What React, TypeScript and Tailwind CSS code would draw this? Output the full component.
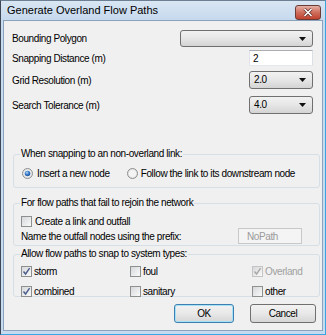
import React from 'react'

const sans = "font-['Liberation_Sans',Arial,sans-serif]"

function Arrow() {
  return (
    <svg width="7" height="4" viewBox="0 0 7 4" className="shrink-0">
      <path d="M0 0 H7 L3.5 4 Z" fill="#111" />
    </svg>
  )
}

function Combo({ value, className }: { value?: string; className: string }) {
  return (
    <div className={`flex items-center justify-between rounded-[3px] border border-[#707070] bg-gradient-to-b from-[#f2f2f2] via-[#e6e6e6] to-[#d4d4d4] pl-[4px] pr-[6px] ${className}`}>
      <span className="leading-none">{value}</span>
      <Arrow />
    </div>
  )
}

function CheckBox({ checked, disabled }: { checked?: boolean; disabled?: boolean }) {
  return (
    <span className={`flex h-[11px] w-[11px] shrink-0 items-center justify-center border ${disabled ? 'border-[#c4c4c4]' : 'border-[#8e8f8f]'} bg-gradient-to-br from-[#d6d8db] to-[#fafafa]`}>
      {checked && (
        <svg width="9" height="9" viewBox="0 0 9 9">
          <path d="M1.5 4.5 L3.6 7 L7.6 1.2" fill="none" stroke={disabled ? '#a8a8a8' : '#4a5d88'} strokeWidth="1.4" />
        </svg>
      )}
    </span>
  )
}

function Radio({ checked }: { checked?: boolean }) {
  return (
    <svg width="11" height="11" viewBox="0 0 11 11" className="shrink-0">
      <defs>
        <radialGradient id="rg" cx="0.4" cy="0.35" r="0.7">
          <stop offset="0" stopColor="#b8dcf7" />
          <stop offset="0.5" stopColor="#3a7bc8" />
          <stop offset="1" stopColor="#1d4f91" />
        </radialGradient>
      </defs>
      <circle cx="5.5" cy="5.5" r="5" fill="#e4e4e4" stroke="#8e8f8f" strokeWidth="1" />
      <circle cx="5.5" cy="5.5" r="3.6" fill="#f4f4f4" />
      {checked && <circle cx="5.5" cy="5.5" r="2.8" fill="url(#rg)" />}
    </svg>
  )
}

function Group({ title, className, children }: { title: string; className: string; children: React.ReactNode }) {
  return (
    <fieldset className={`ml-[9px] mr-[2px] rounded-[3px] border border-[#d5dfe5] ${className}`}>
      <legend className="ml-[6px] px-[1px] leading-[12px]">{title}</legend>
      {children}
    </fieldset>
  )
}

function Button({ label, primary, className }: { label: string; primary?: boolean; className: string }) {
  return (
    <div className={`flex h-[19px] items-center justify-center rounded-[3px] border ${primary ? 'border-[#3c7fb1] shadow-[inset_0_0_0_1px_#a6e1f7]' : 'border-[#707070]'} bg-gradient-to-b from-[#f2f2f2] via-[#e8e8e8] to-[#d6d6d6] ${className}`}>
      {label}
    </div>
  )
}

export default function App() {
  const rows = [
    { label: 'Bounding Polygon', ctl: <Combo className="h-[17px] w-[133px]" /> },
  ]

  return (
    <div className={`${sans} flex h-[335px] w-[326px] flex-col border border-l-[#3d4652] border-t-[#6d7f93] border-r-[#3aa6e0] border-b-[#3aa6e0] bg-[#c6dbef] text-black`}>
      <div className="flex h-[19px] shrink-0 items-center justify-between bg-gradient-to-b from-[#d9e6f3] to-[#c6d9ed] pl-[6px] pr-[4px]">
        <span className="text-[11px] leading-none">Generate Overland Flow Paths</span>
        <div className="mt-[3px] flex h-[15px] w-[26px] items-center justify-center rounded-[3px] border border-[#6b3b36] bg-gradient-to-b from-[#e5b1a6] via-[#cf6d5c] to-[#c0412d]">
          <svg width="10" height="9" viewBox="0 0 10 9">
            <path d="M1.5 1 L8.5 8 M8.5 1 L1.5 8" stroke="#5b2b26" strokeWidth="3" />
            <path d="M1.5 1 L8.5 8 M8.5 1 L1.5 8" stroke="#fff" strokeWidth="1.6" />
          </svg>
        </div>
      </div>

      <div className="ml-[2px] mr-[2px] mb-[3px] flex flex-1 flex-col border border-[#8aa2bb] bg-[#f0f0f0] text-[10px] tracking-[-0.4px]">
        <div className="flex flex-col pl-[8px] pr-[9px] pt-[9px]">
          {rows.map(({ label, ctl }) => (
            <div key={label} className="flex items-center justify-between">
              <span>{label}</span>
              {ctl}
            </div>
          ))}
          <div className="mt-[3px] flex items-center justify-between">
            <span>Snapping Distance (m)</span>
            <div className="flex h-[16px] w-[64px] items-center border border-[#abadb3] border-l-[#e2e3ea] border-r-[#dbdfe6] border-b-[#e3e9ef] bg-white pl-[3px]">2</div>
          </div>
          <div className="mt-[5px] flex items-center justify-between">
            <span>Grid Resolution (m)</span>
            <Combo value="2.0" className="h-[18px] w-[64px]" />
          </div>
          <div className="mt-[7px] flex items-center justify-between">
            <span>Search Tolerance (m)</span>
            <Combo value="4.0" className="h-[18px] w-[64px]" />
          </div>
        </div>

        <Group title="When snapping to an non-overland link:" className="mt-[34px] h-[40px]">
          <div className="flex items-center pl-[8px] pt-[6px]">
            <Radio checked />
            <span className="ml-[4px]">Insert a new node</span>
            <span className="ml-[17px]"><Radio /></span>
            <span className="ml-[3px]">Follow the link to its downstream node</span>
          </div>
        </Group>

        <Group title="For flow paths that fail to rejoin the network" className="mt-[9px] h-[49px]">
          <div className="flex flex-col pl-[7px] pr-[17px]">
            <div className="mt-[5px] flex items-center">
              <CheckBox />
              <span className="ml-[3px]">Create a link and outfall</span>
            </div>
            <div className="-mt-[1px] flex items-center justify-between">
              <span>Name the outfall nodes using the prefix:</span>
              <div className="flex h-[16px] w-[64px] items-center border border-[#c8c8c8] bg-[#f4f4f4] pl-[8px] text-[#9a9a9a]">NoPath</div>
            </div>
          </div>
        </Group>

        <Group title="Allow flow paths to snap to system types:" className="mt-[2px] h-[49px]">
          <div className="grid grid-cols-[109px_122px_1fr] gap-y-[5px] pl-[7px] pt-[3px]">
            <div className="flex items-center"><CheckBox checked /><span className="ml-[2px]">storm</span></div>
            <div className="mt-[1px] flex items-center"><CheckBox /><span className="ml-[2px]">foul</span></div>
            <div className="flex items-center text-[#a0a0a0]"><CheckBox checked disabled /><span className="ml-[2px]">Overland</span></div>
            <div className="flex items-center"><CheckBox checked /><span className="ml-[2px]">combined</span></div>
            <div className="flex items-center"><CheckBox /><span className="ml-[2px]">sanitary</span></div>
            <div className="flex items-center"><CheckBox /><span className="ml-[2px]">other</span></div>
          </div>
        </Group>

        <div className="mr-[6px] mt-[7px] flex justify-end gap-[16px]">
          <Button label="OK" primary className="w-[60px]" />
          <Button label="Cancel" className="w-[66px]" />
        </div>
      </div>
    </div>
  )
}
